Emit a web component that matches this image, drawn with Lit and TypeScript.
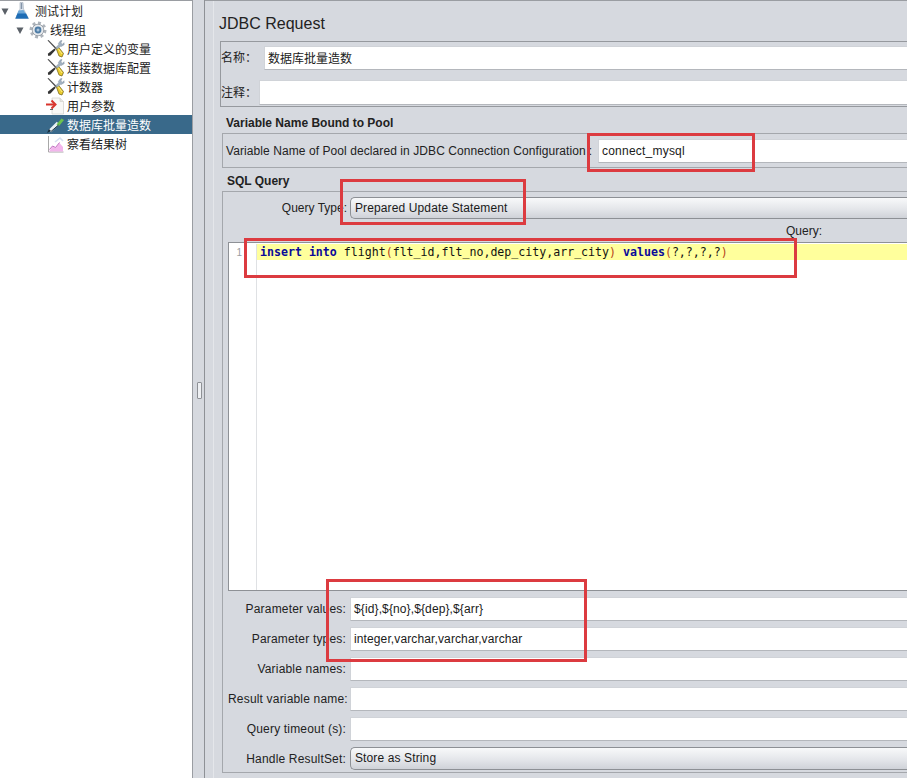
import { LitElement, html, css } from "lit";
import { customElement } from "lit/decorators.js";

const triangle = html`<svg class="tri-svg" width="9" height="9" viewBox="0 0 9 9"><path d="M.5 1.500h7L4 8z" fill="#5b6168"/></svg>`;

const flask = html`<svg width="16" height="19" viewBox="0 0 16 19"><path d="M6 1.500h3l.5 6.500 5 9.500H1.500l4.500-9.500z" fill="#dce4ee" stroke="#aab4c0" stroke-width=".7"/><path d="M4.500 9.500l5-.5 5 8.500H1.500z" fill="#6ea8d8"/><path d="M3.500 12.500h8.500l2.500 5H1.500z" fill="#1f6db5"/><path d="M6.800 2h1.400v6H6.800z" fill="#8494a8"/></svg>`;

const gear = html`<svg width="18" height="18" viewBox="0 0 18 18"><circle cx="9" cy="9" r="6.800" fill="none" stroke="#aeb4bb" stroke-width="3.400" stroke-dasharray="2.800 2.500"/><circle cx="9" cy="9" r="5.800" fill="#e6e9ed" stroke="#8e959d" stroke-width=".8"/><circle cx="9" cy="9" r="3.400" fill="#4f7da6"/><circle cx="9" cy="9" r="1.500" fill="#a9c3da"/></svg>`;

const tools = html`<svg width="19" height="19" viewBox="0 0 19 19"><path d="M1.500 1.500l1-.5 8 8-1 1z" fill="#4a4a4a"/><path d="M10 9l2-1.500 5.500 7-1.500 3.500-3-1z" fill="#e9cb2e" stroke="#6d5c12" stroke-width=".7"/><path d="M12.500 10l3.500 5" stroke="#fff2a0" stroke-width=".8"/><path d="M16 1.500l-1.200 2.700 1.800 1 1.400-1.500.2 2-3 1.800-1-.3-3 3-1.500-1.500 3-3-.3-1.200 2-2.700z" fill="#a3b3c4" stroke="#6f7f90" stroke-width=".4"/><path d="M8.500 9.500l1.200 1.200-5.200 5.800-2.200.5-.5-2.200z" fill="#333"/></svg>`;

const params = html`<svg width="19" height="18" viewBox="0 0 19 18"><path d="M6 1h8l3.500 3.500V17H6z" fill="#f8f8f6" stroke="#d6d6d2" stroke-width=".8"/><path d="M14 1v3.500h3.500" fill="#e6e6e2" stroke="#cfcfca" stroke-width=".6"/><path d="M0 7.500h8" stroke="#d8342c" stroke-width="2"/><path d="M5.500 3.500L9.500 7.500l-4 4" fill="none" stroke="#d8342c" stroke-width="2"/><path d="M4 12.500h3" stroke="#555" stroke-width=".9"/></svg>`;

const sampler = html`<svg width="19" height="18" viewBox="0 0 19 18"><path d="M4 15l8-8" stroke="#e8f0f4" stroke-width="3.400"/><path d="M1 17l2-4 2 2z" fill="#1a2c38"/><path d="M10.500 8.500l5-6 2.500 1.500-5 6z" fill="#6cc24f"/><path d="M5 15.500l7.500-6.500" stroke="#22343f" stroke-width="1"/></svg>`;

const graph = html`<svg width="18" height="18" viewBox="0 0 18 18"><path d="M2.500 1v16h15" fill="none" stroke="#a8a8a8" stroke-width="1"/><path d="M3 16.500l3.500-5 3 1.500 4-5 3.500 4v4.500z" fill="#f2b6ec"/><path d="M3.500 14.500l3-3.500 3 1.500 4-5" fill="none" stroke="#b860b8" stroke-width=".9"/><path d="M9 7l5-4 3 3" fill="none" stroke="#d5e0ef" stroke-width="1.600"/></svg>`;

interface Node { label: string; icon: unknown; indent: number; tri?: boolean; selected?: boolean; }
const nodes: Node[] = [
  { label: "测试计划", icon: flask, indent: 14, tri: true },
  { label: "线程组", icon: gear, indent: 29, tri: true },
  { label: "用户定义的变量", icon: tools, indent: 46 },
  { label: "连接数据库配置", icon: tools, indent: 46 },
  { label: "计数器", icon: tools, indent: 46 },
  { label: "用户参数", icon: params, indent: 46 },
  { label: "数据库批量造数", icon: sampler, indent: 46, selected: true },
  { label: "察看结果树", icon: graph, indent: 46 },
];

@customElement("app-root")
export class AppRoot extends LitElement {
  static styles = css`
    :host {
      display: flex;
      width: 907px;
      height: 778px;
      overflow: hidden;
      background: #d6d9df;
      color: #222;
      font: 12px "Liberation Sans", "Noto Sans CJK SC", sans-serif;
      position: relative;
    }
    .tree {
      width: 192px;
      flex: none;
      background: #fff;
      border-top: 1px solid #9a9da2;
      border-right: 1px solid #9a9da2;
      box-sizing: content-box;
    }
    .node {
      height: 19px;
      display: flex;
      align-items: center;
      position: relative;
      font-family: "Noto Sans CJK SC", sans-serif;
      color: #1c1c1c;
    }
    .node.selected { background: #39698a; color: #fff; }
    .icon { width: 21px; flex: none; display: flex; align-items: center; }
    .tri { position: absolute; top: 6px; line-height: 0; }
    .splitter {
      width: 10px;
      flex: none;
      border-right: 1px solid #8e9196;
      border-left: 1px solid #d6d9df;
      display: flex;
      align-items: center;
      justify-content: center;
      padding-top: 3px;
    }
    .handle {
      width: 3px;
      height: 15px;
      border: 1px solid #8e9196;
      border-radius: 1px;
      background: #eef0f3;
    }
    .panel {
      flex: 1;
      min-width: 0;
      border-top: 1px solid #9a9da2;
      padding-left: 8px;
      box-sizing: border-box;
    }
    .inner {
      border-left: 1px solid #e4e6ea;
      padding-left: 6px;
      height: 100%;
    }
    .title {
      height: 40px;
      display: flex;
      align-items: center;
      font-size: 16px;
      padding-top: 6px;
      box-sizing: border-box;
      margin-left: -1px;
    }
    .names {
      height: 66px;
      box-sizing: border-box;
      border: 1px solid #96999e;
      border-right: none;
      padding: 4px 0 0 0;
      display: flex;
      flex-direction: column;
      gap: 10px;
    }
    .name-row { display: flex; align-items: center; }
    .name-row label { font-family: "Noto Sans CJK SC", sans-serif; padding-bottom: 3px; }
    .name-row.a label { width: 43px; }
    .name-row.b label { width: 38px; }
    .name-row.a .field { height: 24px; }
    .name-row.b .field { height: 25px; }
    .field {
      flex: 1;
      min-width: 0;
      background: #fff;
      border: 1px solid #d0d3d8;
      border-bottom-color: #b4b7bc;
      border-right: none;
      box-sizing: border-box;
      padding-left: 3px;
      display: flex;
      align-items: center;
      color: #1a1a1a;
      letter-spacing: 0.12px;
    }
    .field.cjk { font-family: "Noto Sans CJK SC", sans-serif; padding-bottom: 2px; letter-spacing: 0; }
    .section {
      height: 26px;
      margin-left: 6px;
      display: flex;
      align-items: center;
      font-weight: bold;
      padding-top: 6px;
      box-sizing: border-box;
    }
    .pool {
      margin-left: 2px;
      height: 35px;
      box-sizing: border-box;
      border: 1px solid #a4a7ac;
      border-right: none;
      display: flex;
      padding: 5px 0 0 3px;
      gap: 4px;
    }
    .pool label {
      width: 368px;
      flex: none;
      height: 24px;
      display: flex;
      align-items: center;
      white-space: nowrap;
      letter-spacing: 0.08px;
    }
    .colon { margin-left: 3px; }
    .pool .field { height: 24px; letter-spacing: 0.22px; }
    .section.sql {
      height: 23px;
      padding-top: 2px;
      margin-left: 7px;
    }
    .sql-box {
      margin-left: 2px;
      height: 582px;
      box-sizing: border-box;
      border: 1px solid #a4a7ac;
      border-right: none;
      padding: 5px 0 0 5px;
    }
    .row { display: grid; grid-template-columns: 120px 1fr; column-gap: 2px; align-items: center; }
    .row label { text-align: right; white-space: nowrap; letter-spacing: 0.18px; padding-right: 2px; }
    .row.top label { letter-spacing: 0; padding-right: 1px; }
    .combo {
      height: 22px;
      box-sizing: border-box;
      border: 1px solid #8d9095;
      border-right: none;
      border-radius: 5px 0 0 5px;
      background: linear-gradient(#f8f9fa, #e4e6ea 55%, #cfd2d8);
      display: flex;
      align-items: center;
      padding-left: 4px;
      color: #1a1a1a;
      letter-spacing: 0.12px;
    }
    .query-label {
      height: 23px;
      display: flex;
      align-items: center;
      padding: 1px 0 0 558px;
      box-sizing: border-box;
      white-space: nowrap;
    }
    .editor {
      height: 349px;
      box-sizing: border-box;
      background: #fff;
      border: 1px solid #8e9196;
      border-right: none;
      display: flex;
      padding-top: 1px;
    }
    .gutter {
      width: 28px;
      flex: none;
      border-right: 1px solid #dfe1e4;
      text-align: right;
      color: #9a9da2;
      font: 10px/16px "Liberation Sans", sans-serif;
      padding-right: 14px;
      box-sizing: border-box;
      padding-top: 1px;
    }
    .code { flex: 1; min-width: 0; }
    .line {
      height: 16px;
      background: #ffff9c;
      font: 11.600px/16px "DejaVu Sans Mono", monospace;
      padding-left: 3px;
      white-space: pre;
      color: #111;
    }
    .kw { color: #0a0a9a; font-weight: bold; }
    .paren { color: #b5451b; }
    .params {
      display: flex;
      flex-direction: column;
      gap: 6px;
      padding-top: 6px;
    }
    .params .field { height: 24px; }
    .params .combo { height: 23px; padding-bottom: 1px; }
    .mark {
      position: absolute;
      box-sizing: border-box;
      border: 3px solid #dc3b40;
      pointer-events: none;
    }
  `;

  render() {
    const fields = [
      ["Parameter values:", "${id},${no},${dep},${arr}"],
      ["Parameter types:", "integer,varchar,varchar,varchar"],
      ["Variable names:", ""],
      ["Result variable name:", ""],
      ["Query timeout (s):", ""],
    ];
    return html`
      <div class="tree">
        ${nodes.map(
          (n) => html`<div class="node ${n.selected ? "selected" : ""}" style="padding-left:${n.indent}px">
            ${n.tri ? html`<span class="tri" style="left:${n.indent - 13}px">${triangle}</span>` : null}
            <span class="icon">${n.icon}</span><span>${n.label}</span>
          </div>`
        )}
      </div>
      <div class="splitter"><div class="handle"></div></div>
      <div class="panel">
        <div class="inner">
          <div class="title">JDBC Request</div>
          <div class="names">
            <div class="name-row a"><label>名称：</label><div class="field cjk">数据库批量造数</div></div>
            <div class="name-row b"><label>注释：</label><div class="field"></div></div>
          </div>
          <div class="section">Variable Name Bound to Pool</div>
          <div class="pool">
            <label>Variable Name of Pool declared in JDBC Connection Configuration<span class="colon">:</span></label>
            <div class="field">connect_mysql</div>
          </div>
          <div class="section sql">SQL Query</div>
          <div class="sql-box">
            <div class="row top">
              <label>Query Type:</label>
              <div class="combo">Prepared Update Statement</div>
            </div>
            <div class="query-label">Query:</div>
            <div class="editor">
              <div class="gutter">1</div>
              <div class="code">
                <div class="line"><span class="kw">insert</span> <span class="kw">into</span> flight<span class="paren">(</span>flt_id,flt_no,dep_city,arr_city<span class="paren">)</span> <span class="kw">values</span><span class="paren">(</span>?,?,?,?<span class="paren">)</span></div>
              </div>
            </div>
            <div class="params">
              ${fields.map(
                ([l, v]) => html`<div class="row"><label>${l}</label><div class="field">${v}</div></div>`
              )}
              <div class="row"><label>Handle ResultSet:</label><div class="combo">Store as String</div></div>
            </div>
          </div>
        </div>
      </div>
      <div class="mark" style="left:587px;top:133px;width:168px;height:39px"></div>
      <div class="mark" style="left:340px;top:179px;width:186px;height:46px"></div>
      <div class="mark" style="left:244px;top:238px;width:553px;height:40px"></div>
      <div class="mark" style="left:326px;top:579px;width:261px;height:83px"></div>
    `;
  }
}
